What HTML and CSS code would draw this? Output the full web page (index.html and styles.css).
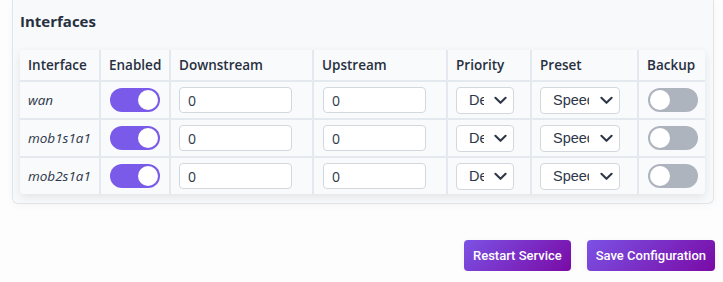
FILE: index.html
```html
<!DOCTYPE html>
<html>
<head>
<meta charset="utf-8">
<link rel="stylesheet" href="styles.css">
</head>
<body>
<div class="page">
  <section class="card">
    <h2 class="title">Interfaces</h2>
    <table class="grid">
      <colgroup>
        <col class="c-if"><col class="c-en"><col class="c-down"><col class="c-up"><col class="c-pri"><col class="c-pre"><col class="c-bk">
      </colgroup>
      <thead>
        <tr><th>Interface</th><th>Enabled</th><th>Downstream</th><th>Upstream</th><th>Priority</th><th>Preset</th><th>Backup</th></tr>
      </thead>
      <tbody>
        <tr>
          <td class="name">wan</td>
          <td><span class="toggle on"><span class="knob"></span></span></td>
          <td><input class="field down" value="0"></td>
          <td><input class="field up" value="0"></td>
          <td><select class="sel pri"><option>Default</option></select></td>
          <td><select class="sel pre"><option>Speedtest</option></select></td>
          <td><span class="toggle"><span class="knob"></span></span></td>
        </tr>
        <tr>
          <td class="name">mob1s1a1</td>
          <td><span class="toggle on"><span class="knob"></span></span></td>
          <td><input class="field down" value="0"></td>
          <td><input class="field up" value="0"></td>
          <td><select class="sel pri"><option>Default</option></select></td>
          <td><select class="sel pre"><option>Speedtest</option></select></td>
          <td><span class="toggle"><span class="knob"></span></span></td>
        </tr>
        <tr>
          <td class="name">mob2s1a1</td>
          <td><span class="toggle on"><span class="knob"></span></span></td>
          <td><input class="field down" value="0"></td>
          <td><input class="field up" value="0"></td>
          <td><select class="sel pri"><option>Default</option></select></td>
          <td><select class="sel pre"><option>Speedtest</option></select></td>
          <td><span class="toggle"><span class="knob"></span></span></td>
        </tr>
      </tbody>
    </table>
  </section>
  <div class="actions">
    <button class="btn">Restart Service</button>
    <button class="btn">Save Configuration</button>
  </div>
</div>
</body>
</html>
```
FILE: styles.css
```css
html, body {
  margin: 0;
  padding: 0;
  background: #fdfdfe;
  font-family: "Open Sans", "Noto Sans", sans-serif;
  color: #2d3748;
}
.page {
  padding: 0 8px 0 12px;
}
.card {
  background: #f8f9fb;
  border: 1px solid #e1e4e9;
  border-top: none;
  border-radius: 0 0 6px 6px;
  margin-right: 1px;
  padding: 11px 8px 9px 7px;
  box-shadow: 0 2px 10px rgba(0, 0, 0, 0.03);
}
.title {
  margin: 0 0 19px 0;
  font-size: 15px;
  line-height: 20px;
  font-weight: 700;
  color: #27303f;
}
.grid {
  border-collapse: collapse;
  width: 685px;
  table-layout: fixed;
  background: #f9fafc;
  border-radius: 4px;
  box-shadow: 0 3px 10px rgba(0, 0, 0, 0.09);
  font-size: 13.5px;
}
.c-if { width: 80px; }
.c-en { width: 70px; }
.c-down { width: 143px; }
.c-up { width: 134px; }
.c-pri { width: 84px; }
.c-pre { width: 107px; }
.c-bk { width: 67px; }
.grid th, .grid td {
  border: 2px solid #e4e9ef;
  padding: 0 0 0 8px;
  text-align: left;
  white-space: nowrap;
  overflow: hidden;
}
.grid tr > :first-child { border-left: none; }
.grid tr > :last-child { border-right: none; }
.grid thead th { border-top: none; }
.grid tbody tr:last-child td { border-bottom: none; }
.grid th {
  height: 30px;
  font-weight: 600;
  color: #27303f;
}
.grid td {
  height: 36px;
}
.name {
  font-style: italic;
  color: #2d3748;
}
.toggle {
  display: block;
  width: 50px;
  height: 24px;
  margin-left: 1px;
  border-radius: 12px;
  background: #adb4bd;
  position: relative;
}
.toggle.on { background: #7a5ae8; }
.knob {
  position: absolute;
  top: 2px;
  left: 2px;
  width: 20px;
  height: 20px;
  border-radius: 50%;
  background: #fff;
}
.toggle.on .knob { left: 28px; }
.field {
  display: block;
  box-sizing: border-box;
  height: 26px;
  border: 1px solid #d3d8de;
  border-radius: 4px;
  background: #fff;
  padding: 0 8px;
  font-family: "Open Sans", "Noto Sans", sans-serif;
  font-size: 14px;
  color: #2d3748;
  outline: none;
}
.field.down { width: 113px; }
.field.up { width: 103px; margin-left: 1px; }
.sel {
  display: block;
  box-sizing: border-box;
  height: 27px;
  border: 1px solid #d3d8de;
  border-radius: 4px;
  background-color: #fff;
  -webkit-appearance: none;
  appearance: none;
  padding: 0 30px 0 12px;
  font-family: "Liberation Sans", Arial, sans-serif;
  font-size: 14.5px;
  color: #2d3748;
  background-image: url("data:image/svg+xml;utf8,<svg xmlns='http://www.w3.org/2000/svg' width='14' height='9' viewBox='0 0 14 9'><path d='M1.5 1.5 L7 7 L12.5 1.5' fill='none' stroke='%232d3748' stroke-width='2.2' stroke-linecap='round' stroke-linejoin='round'/></svg>");
  background-repeat: no-repeat;
  background-position: right 6px center;
  background-size: 13px 9px;
}
.sel.pri { width: 58px; padding-right: 29px; }
.sel.pre { width: 80px; padding-left: 12px; padding-right: 30px; }
.actions {
  display: flex;
  justify-content: flex-end;
  gap: 16px;
  margin-top: 36px;
}
.btn {
  height: 31px;
  padding: 0 9px;
  border: none;
  border-radius: 4px;
  background: linear-gradient(135deg, #7b52e4 0%, #7a0aa6 100%);
  color: #fff;
  font-family: Roboto, "Liberation Sans", sans-serif;
  font-weight: 500;
  font-size: 13px;
  box-shadow: 0 2px 6px rgba(0, 0, 0, 0.06);
}
```
